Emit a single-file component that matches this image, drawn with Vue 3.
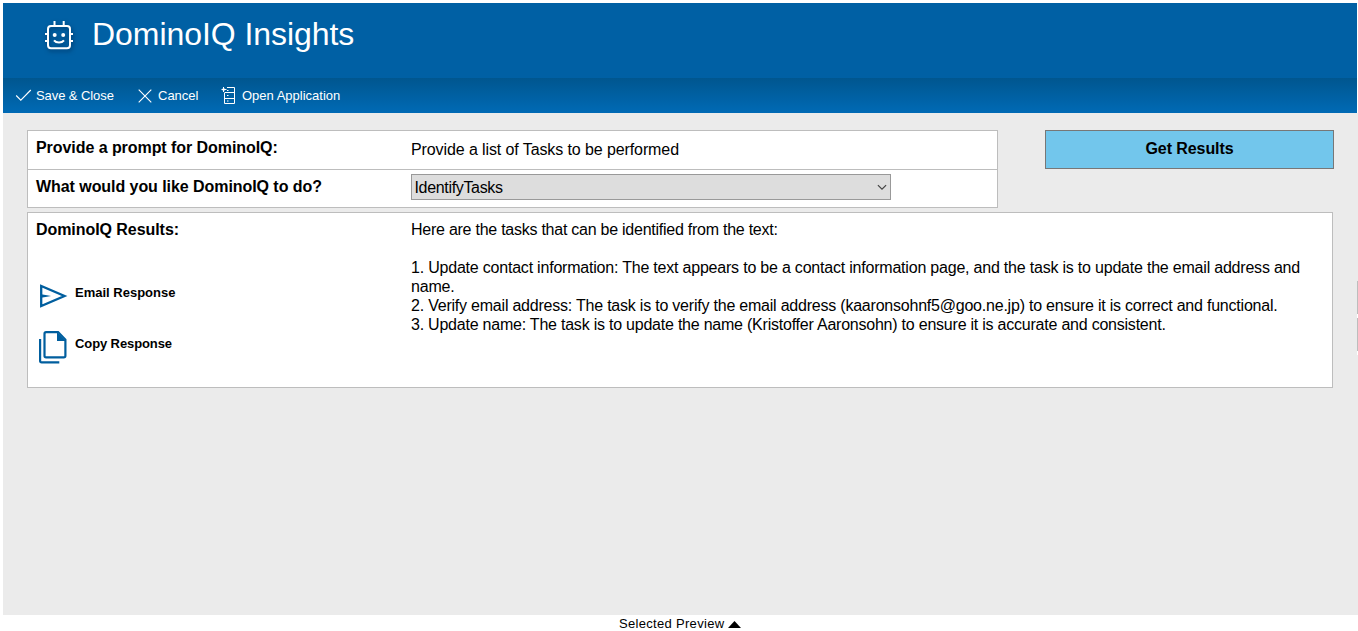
<script setup>
const results = [
  { text: 'Here are the tasks that can be identified from the text:', cls: 'intro' },
  { text: '', cls: 'blank' },
  { text: '1. Update contact information: The text appears to be a contact information page, and the task is to update the email address and', cls: 'first' },
  { text: 'name.', cls: 'wrap' },
  { text: '2. Verify email address: The task is to verify the email address (kaaronsohnf5@goo.ne.jp) to ensure it is correct and functional.', cls: 'second' },
  { text: '3. Update name: The task is to update the name (Kristoffer Aaronsohn) to ensure it is accurate and consistent.', cls: 'third' },
]
</script>

<template>
  <div class="window">
    <header class="banner">
      <svg class="robot" width="32" height="34" viewBox="0 0 32 34" fill="none" stroke="#fff" stroke-width="2">
        <rect x="5" y="6" width="22" height="22.3" rx="3" />
        <path d="M11.5 1v5M20.7 1v5M2 14h3M2 21h3M27 14h3M27 21h3" />
        <path d="M11 20.4c2.3 2.9 7.7 2.9 10 0" />
        <circle cx="11.7" cy="15" r="2" fill="#fff" stroke="none" />
        <circle cx="20.2" cy="15" r="2" fill="#fff" stroke="none" />
      </svg>
      <h1>DominoIQ Insights</h1>
    </header>
    <nav class="toolbar">
      <a class="tool save">
        <svg width="17" height="17" viewBox="0 0 17 17" fill="none" stroke="#fff" stroke-width="1.1"><path d="M1.2 8.5l4.6 4.6L15.8 3" /></svg>
        <span>Save &amp; Close</span>
      </a>
      <a class="tool cancel">
        <svg width="14" height="14" viewBox="0 0 14 14" fill="none" stroke="#fff" stroke-width="1.1"><path d="M.7.7l12.6 12.6M13.3.7L.7 13.3" /></svg>
        <span>Cancel</span>
      </a>
      <a class="tool open">
        <svg width="15" height="18" viewBox="0 0 15 18" fill="none" stroke="#fff" stroke-width="1">
          <path d="M6 .5h7.5v16h-10V6M3.5 5.5h10M3.5 11.5h10M.5 2.5h5M2.5 0v5M6 3.5h1.5M6 8.5h1.5M6 14h1.5" />
          <path d="M1.5 2.5h2.4" stroke-width="2" />
        </svg>
        <span>Open Application</span>
      </a>
    </nav>

    <main class="content">
      <div class="top">
        <section class="form">
          <div class="row">
            <label>Provide a prompt for DominoIQ:</label>
            <div class="value"><span class="prompt">Provide a list of Tasks to be performed</span></div>
          </div>
          <div class="row second-row">
            <label>What would you like DominoIQ to do?</label>
            <div class="select">
              <span>IdentifyTasks</span>
              <svg width="10" height="7" viewBox="0 0 10 7" fill="none" stroke="#444" stroke-width="1.2"><path d="M.9 1.1L5 5.2l4.1-4.1" /></svg>
            </div>
          </div>
        </section>
        <button class="get"><span>Get Results</span></button>
      </div>

      <section class="results">
        <div class="side">
          <label class="rlabel">DominoIQ Results:</label>
          <div class="action email">
            <svg width="30" height="26" viewBox="0 0 30 26" fill="none" stroke="#005e9e" stroke-width="2.3">
              <path d="M3.2 3v20L26.5 13z" />
              <path d="M3 11.2l6 1 4 .8-4 .8-6 1z" fill="#005e9e" stroke="none" />
            </svg>
            <span>Email Response</span>
          </div>
          <div class="action copy">
            <svg width="30" height="34" viewBox="0 0 30 34" fill="none" stroke="#005e9e" stroke-width="2.2">
              <path d="M8.1 2.1h12l7.3 7.5v16.1q0 1.6-1.6 1.6H8.1q-1.6 0-1.6-1.6v-22q0-1.6 1.6-1.6z" />
              <path d="M19 2v9h8.8z" fill="#005e9e" stroke="none" />
              <path d="M2.1 9v21.7q0 1.6 1.6 1.6h17.6" />
            </svg>
            <span>Copy Response</span>
          </div>
        </div>
        <div class="answer">
          <div v-for="line in results" :key="line.cls" class="line"><span :class="line.cls">{{ line.text }}</span></div>
        </div>
      </section>
      <div class="edge"><i></i><i></i></div>
    </main>
    <footer class="preview"><span>Selected Preview</span><svg width="13" height="7" viewBox="0 0 13 7"><path d="M0 7L6.5 0 13 7z" /></svg></footer>
  </div>
</template>

<style>
body { overflow: hidden; background: #fff; }
</style>

<style scoped>
* { box-sizing: border-box; }
.window { width: 1358px; height: 631px; padding: 3px 0 0 3px; display: flex; flex-direction: column; font-family: "Liberation Sans", Arial, sans-serif; font-size: 16px; color: #000; background: #fff; }
.banner { width: 1354px; height: 75px; background: #0060a4; display: flex; padding: 17px 0 0 40px; }
.robot { flex: none; filter: drop-shadow(1px 2px 2px rgba(0, 20, 50, .5)); margin-right: 17px; }
h1 { margin: -5px 0 0; font-weight: 400; font-size: 32px; line-height: 38px; letter-spacing: -.06px; color: #fff; white-space: nowrap; }
.toolbar { width: 1354px; height: 35px; background: linear-gradient(#00568f, #006ab5); display: flex; align-items: center; color: #fff; font-size: 13px; }
.tool { display: flex; align-items: center; white-space: nowrap; }
.tool svg { flex: none; }
.tool span { line-height: 15px; }
.save { width: 123px; padding-left: 12px; gap: 4px; letter-spacing: -.08px; }
.cancel { width: 81px; padding-left: 12px; gap: 6px; margin-right: 14px; }
.open { gap: 6px; margin-left: -3px; padding-left: 3px; }
.content { position: relative; height: 502px; background: #ebebeb; padding: 17px 0 0 24px; }
.top { display: flex; gap: 47px; align-items: flex-start; }
.form { width: 971px; height: 78px; background: #fff; border: 1px solid #bdbdbd; }
.row { display: flex; height: 38px; padding-left: 8px; }
.second-row { border-top: 1px solid #bdbdbd; }
label { font-weight: 700; white-space: nowrap; line-height: 18px; letter-spacing: -.06px; }
.row label { width: 375px; padding-top: 8px; }
.value { padding-top: 10px; line-height: 18px; white-space: nowrap; }
.prompt { letter-spacing: -.1px; }
.select { width: 480px; height: 26px; margin-top: 4px; border: 1px solid #999; background: #ddd; display: flex; align-items: center; justify-content: space-between; padding: 0 3px; }
.select span { letter-spacing: -.33px; padding-top: 2px; margin-left: -.5px; }
.get { width: 289px; height: 39px; border: 1px solid #777; background: #72c6ec; font: 700 16px/18px "Liberation Sans", Arial, sans-serif; letter-spacing: -.08px; color: #000; padding: 0 0 1px; }
.results { width: 1306px; height: 176px; margin-top: 4px; background: #fff; border: 1px solid #bdbdbd; display: flex; padding-left: 8px; }
.side { width: 375px; padding-top: 8px; }
.rlabel { display: block; }
.action { display: flex; gap: 7px; font-size: 13px; font-weight: 700; line-height: 15px; margin-left: 2px; }
.action span { white-space: nowrap; }
.email { margin-top: 44px; height: 26px; }
.email span { padding-top: 2px; }
.copy { margin-top: 21px; letter-spacing: -.1px; }
.copy span { padding-top: 6px; }
.answer { padding-top: 7px; }
.line { height: 19px; line-height: 19px; white-space: nowrap; }
.intro { letter-spacing: -.25px; }
.first { letter-spacing: -.208px; }
.wrap { letter-spacing: -.2px; }
.second { letter-spacing: -.218px; }
.third { letter-spacing: -.225px; }
.edge { position: absolute; right: 0; top: 168px; display: flex; flex-direction: column; }
.edge i { width: 1px; height: 37px; border-bottom: 4px solid #fff; background: #bdbdbd; }
.preview { height: 16px; display: flex; padding-left: 616px; gap: 4px; font-size: 13px; line-height: 17px; }
.preview span { letter-spacing: .31px; }
.preview svg { margin-top: 6px; }
</style>
